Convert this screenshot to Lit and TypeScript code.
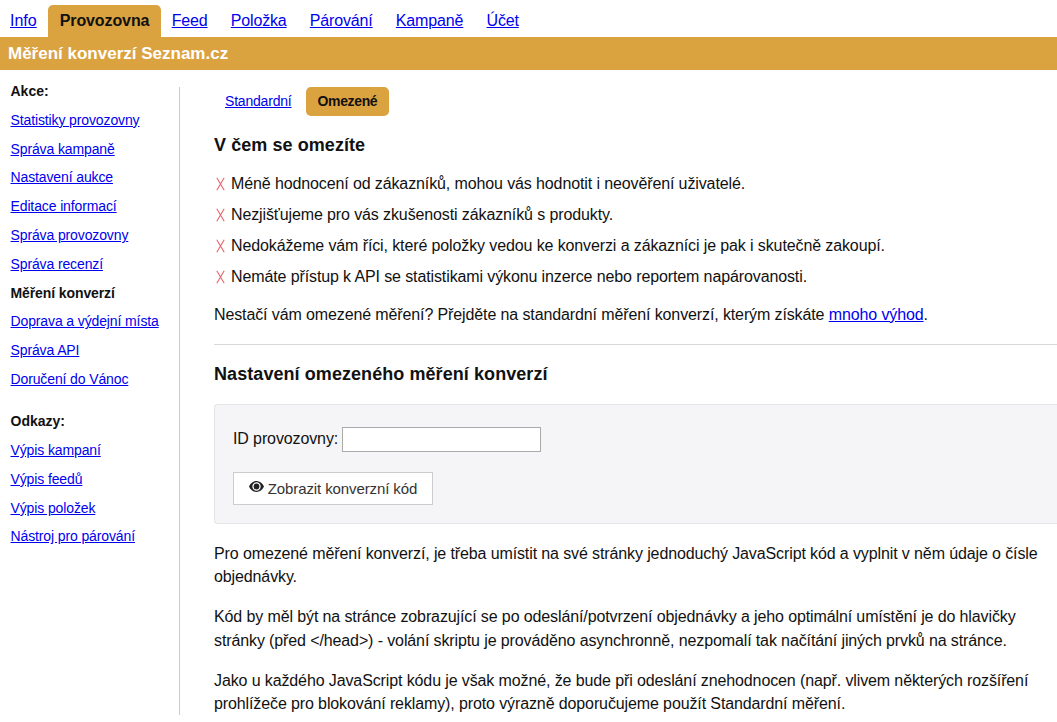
import { LitElement, html, css } from "lit";
import { customElement } from "lit/decorators.js";

const tabs = ["Info", "Provozovna", "Feed", "Položka", "Párování", "Kampaně", "Účet"];
const akce = ["Statistiky provozovny", "Správa kampaně", "Nastavení aukce", "Editace informací", "Správa provozovny", "Správa recenzí", "Měření konverzí", "Doprava a výdejní místa", "Správa API", "Doručení do Vánoc"];
const odkazy = ["Výpis kampaní", "Výpis feedů", "Výpis položek", "Nástroj pro párování"];
const cons = [
  "Méně hodnocení od zákazníků, mohou vás hodnotit i neověření uživatelé.",
  "Nezjišťujeme pro vás zkušenosti zákazníků s produkty.",
  "Nedokážeme vám říci, které položky vedou ke konverzi a zákazníci je pak i skutečně zakoupí.",
  "Nemáte přístup k API se statistikami výkonu inzerce nebo reportem napárovanosti.",
];

@customElement("app-root")
export class AppRoot extends LitElement {
  static styles = css`
    :host { display: block; height: 722px; overflow: hidden; font-family: "Liberation Sans", Arial, sans-serif; font-size: 16px; color: #111; background: #fff; }
    a { color: #0000ee; text-decoration: underline; }
    .tabs { display: flex; height: 37px; padding-left: 10px; align-items: flex-end; }
    .tab { height: 32px; line-height: 32px; margin-right: 23.200px; white-space: nowrap; letter-spacing: -0.15px; }
    .tab.active { background: #dba240; color: #111; font-weight: 700; text-decoration: none; border-radius: 5px 5px 0 0; width: 113px; box-sizing: border-box; padding-left: 12px; margin: 0 11px 0 -12px; letter-spacing: -0.1px; }
    .tab.first { margin-right: 23px; letter-spacing: 0; }
    .title { height: 33px; background: #dba240; color: #fff; font-weight: 700; font-size: 17px; line-height: 33px; padding-left: 8px; }
    .main { display: flex; }
    .side { width: 168.500px; margin-top: 17px; padding-left: 10.500px; border-right: 1px solid #e8c89a; flex: none; font-size: 14px; height: 628px; letter-spacing: -0.12px; }
    .side div, .side a { display: block; height: 28.800px; line-height: 8px; white-space: nowrap; }
    .side .h { font-weight: 700; color: #111; letter-spacing: 0; }
    .side .gap { height: 13.500px; }
    .side .strong { font-weight: 700; color: #111; text-decoration: none; letter-spacing: -0.1px; }
    .content { flex: 1; min-width: 0; padding: 16px 0 0 34px; letter-spacing: -0.115px; }
    .sub { display: flex; align-items: center; height: 30px; font-size: 14px; padding-left: 11px; }
    .sub a { margin-right: 14px; letter-spacing: -0.2px; }
    .sub .on { background: #dba240; color: #111; font-weight: 700; text-decoration: none; border-radius: 5px; height: 29px; line-height: 29px; width: 83px; box-sizing: border-box; padding-left: 12px; letter-spacing: -0.35px; }
    h2 { margin: 0; font-size: 18px; font-weight: 700; line-height: 22px; color: #111; letter-spacing: 0.07px; }
    .h1 { margin-top: 18px; }
    ul { list-style: none; margin: 12px 0 0; padding: 0; }
    li { display: flex; align-items: center; height: 31px; white-space: nowrap; }
    li svg { margin: 0 6px 0 2px; flex: none; }
    p { margin: 0; line-height: 23.500px; }
    .more { margin-top: 11px; white-space: nowrap; }
    hr { border: 0; border-top: 1px solid #d8d8d8; margin: 17px 0 0; }
    .h2b { margin-top: 18px; }
    .box { margin-top: 19px; height: 120px; box-sizing: border-box; background: #f5f5f8; border: 1px solid #e4e4e8; border-right: 0; border-radius: 4px 0 0 4px; padding: 22px 0 0 18px; }
    .row { display: flex; align-items: center; height: 25px; }
    input { box-sizing: border-box; width: 199px; height: 25px; margin: 0 0 0 4px; border: 1px solid #aaa; background: #fff; padding: 0; }
    .btn { display: inline-flex; align-items: center; gap: 4px; box-sizing: border-box; height: 33px; width: 200px; margin-top: 20px; justify-content: center; background: #fff; border: 1px solid #ccc; color: #333; font: inherit; font-size: 15px; letter-spacing: -0.1px; padding: 0; }
    .btn svg { margin-top: -2px; }
    .t1 { margin-top: 18px; }
    .t2 { margin-top: 16.500px; }
  `;

  render() {
    return html`
      <nav class="tabs">
        ${tabs.map((t, i) => i === 1 ? html`<span class="tab active">${t}</span>` : html`<a class="tab ${i === 0 ? "first" : ""}" href="#">${t}</a>`)}
      </nav>
      <div class="title">Měření konverzí Seznam.cz</div>
      <div class="main">
        <aside class="side">
          <div class="h">Akce:</div>
          ${akce.map((t) => t === "Měření konverzí" ? html`<div class="strong">${t}</div>` : html`<a href="#">${t}</a>`)}
          <div class="gap"></div>
          <div class="h">Odkazy:</div>
          ${odkazy.map((t) => html`<a href="#">${t}</a>`)}
        </aside>
        <section class="content">
          <div class="sub"><a href="#">Standardní</a><span class="on">Omezené</span></div>
          <h2 class="h1">V čem se omezíte</h2>
          <ul>
            ${cons.map((t) => html`<li><svg width="9" height="14" viewBox="0 0 9 14" fill="none" stroke="#e8636b" stroke-width="1.100"><path d="M.8 .7 L8.2 13.300M8.200 .7 L.8 13.300"/></svg>${t}</li>`)}
          </ul>
          <p class="more">Nestačí vám omezené měření? Přejděte na standardní měření konverzí, kterým získáte <a href="#">mnoho výhod</a>.</p>
          <hr />
          <h2 class="h2b">Nastavení omezeného měření konverzí</h2>
          <div class="box">
            <div class="row">ID provozovny:<input /></div>
            <button class="btn">
              <svg width="15" height="12" viewBox="0 0 15 12"><path fill="#222" fill-rule="evenodd" d="M7.500 0C4.200 0 1.500 2.200 0 5.500 1.500 8.800 4.200 11 7.500 11s6-2.200 7.500-5.500C13.500 2.200 10.800 0 7.500 0zM7.500 1.200c2.300 0 4.200 1.900 4.200 4.300s-1.900 4.300-4.200 4.300-4.200-1.900-4.200-4.300 1.900-4.300 4.200-4.300z"/><circle cx="7.500" cy="5.500" r="2.900" fill="#222"/></svg>
              Zobrazit konverzní kód
            </button>
          </div>
          <p class="t1">Pro omezené měření konverzí, je třeba umístit na své stránky jednoduchý JavaScript kód a vyplnit v něm údaje o čísle<br />objednávky.</p>
          <p class="t2">Kód by měl být na stránce zobrazující se po odeslání/potvrzení objednávky a jeho optimální umístění je do hlavičky<br />stránky (před &lt;/head&gt;) - volání skriptu je prováděno asynchronně, nezpomalí tak načítání jiných prvků na stránce.</p>
          <p class="t2">Jako u každého JavaScript kódu je však možné, že bude při odeslání znehodnocen (např. vlivem některých rozšíření<br />prohlížeče pro blokování reklamy), proto výrazně doporučujeme použít Standardní měření.</p>
        </section>
      </div>
    `;
  }
}
